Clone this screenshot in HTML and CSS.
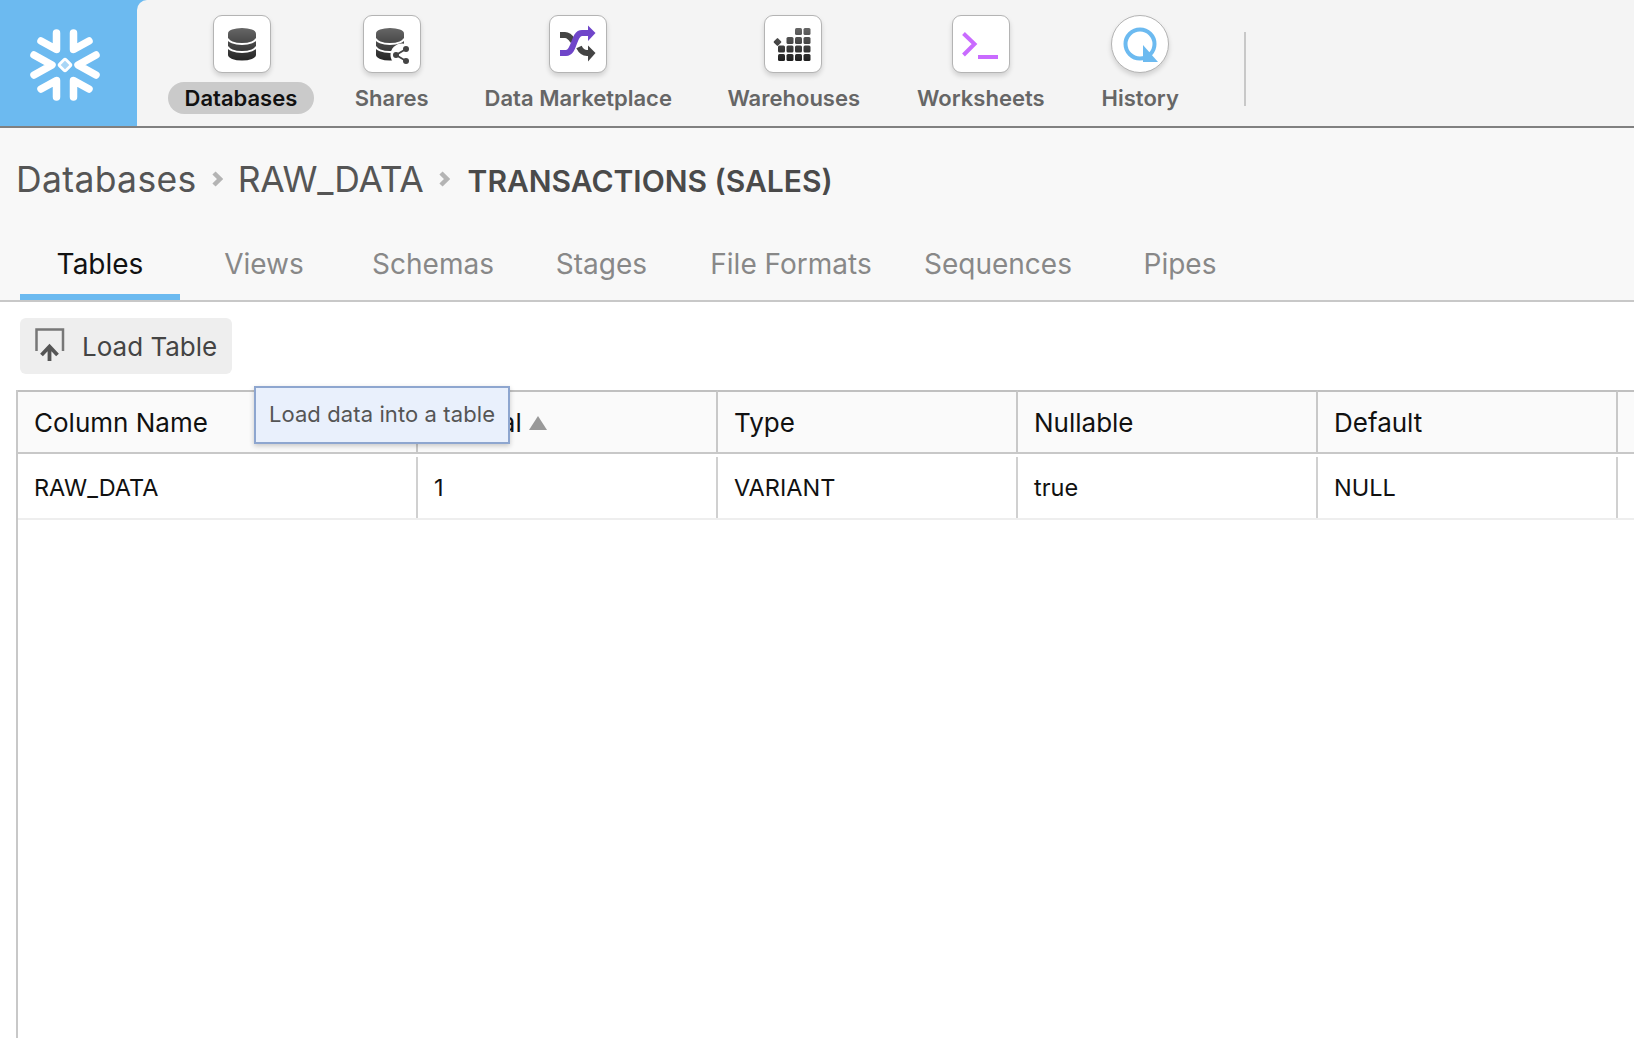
FILE: index.html
```html
<!DOCTYPE html>
<html lang="en">
<head>
    <meta charset="UTF-8">
    <meta name="viewport" content="width=device-width, initial-scale=1.0">
    <title>TRANSACTIONS (SALES)</title>
    <link rel="stylesheet" href="styles.css">
</head>
<body>
    <header class="topbar">
        <div class="logo">
            <svg width="74" height="74" viewBox="-37 -37 74 74">
                <g fill="none" stroke="#fff" stroke-width="7.500" stroke-linecap="round" stroke-linejoin="round">
                    <path d="M-8.500 -32V-15.500L-24 -24"/>
                    <path d="M8.500 -32V-15.500L24 -24"/>
                    <path d="M-8.500 32V15.500L-24 24"/>
                    <path d="M8.500 32V15.500L24 24"/>
                    <path d="M-31 -10L-13 0L-31 10"/>
                    <path d="M31 -10L13 0L31 10"/>
                </g>
                <rect x="-4.500" y="-4.500" width="9" height="9" rx="1.500" transform="rotate(45)" fill="#a9d6f6" stroke="#fff" stroke-width="2.800"/>
            </svg>
        </div>
        <nav class="nav">
            <a class="nav-item active">
                <span class="tile">
                    <svg width="56" height="56" viewBox="0 0 56 56">
                        <defs>
                            <linearGradient id="dark" gradientUnits="userSpaceOnUse" x1="0" y1="12" x2="0" y2="46">
                                <stop offset="0" stop-color="#666"/>
                                <stop offset="1" stop-color="#222"/>
                            </linearGradient>
                        </defs>
                        <path d="M14 17.500a14 5.500 0 0 1 28 0V39a14 5.500 0 0 1 -28 0Z" fill="url(#dark)"/>
                        <path d="M14 22.500a14 5.500 0 0 0 28 0M14 30.500a14 5.500 0 0 0 28 0" fill="none" stroke="#fff" stroke-width="1.800"/>
                    </svg>
                </span>
                <span class="label">Databases</span>
            </a>
            <a class="nav-item shares">
                <span class="tile">
                    <svg width="56" height="56" viewBox="0 0 56 56">
                        <path d="M12 17.500a14 5.500 0 0 1 28 0V39a14 5.500 0 0 1 -28 0Z" fill="url(#dark)"/>
                        <path d="M12 22.500a14 5.500 0 0 0 28 0M12 30.500a14 5.500 0 0 0 28 0" fill="none" stroke="#fff" stroke-width="1.800"/>
                        <circle cx="38" cy="39" r="11.500" fill="#fff"/>
                        <path d="M42 33L32 39L42 45" fill="none" stroke="#444" stroke-width="1.800"/>
                        <circle cx="42" cy="33" r="3" fill="#444"/>
                        <circle cx="32" cy="39" r="3" fill="#444"/>
                        <circle cx="42" cy="45" r="3" fill="#444"/>
                    </svg>
                </span>
                <span class="label">Shares</span>
            </a>
            <a class="nav-item market">
                <span class="tile">
                    <svg width="56" height="56" viewBox="0 0 56 56">
                        <path d="M10 19H15C19 19 21 22 23 25M29 31C31 35 33 37 37 37H39" fill="none" stroke="#444" stroke-width="6"/>
                        <path d="M38 29.500L45.500 37L38 45.500Z" fill="#444"/>
                        <path d="M10 37H16C25 37 23 17 32 17H39" fill="none" stroke="#6f45c9" stroke-width="6"/>
                        <path d="M38 9.500L45.500 17L38 25Z" fill="#6f45c9"/>
                    </svg>
                </span>
                <span class="label">Data Marketplace</span>
            </a>
            <a class="nav-item warehouses">
                <span class="tile">
                    <svg width="56" height="56" viewBox="0 0 56 56">
                        <defs>
                            <linearGradient id="bricks" gradientUnits="userSpaceOnUse" x1="0" y1="12" x2="0" y2="46">
                                <stop offset="0" stop-color="#666"/>
                                <stop offset="1" stop-color="#1c1c1c"/>
                            </linearGradient>
                        </defs>
                        <g fill="url(#bricks)">
                            <rect x="30" y="12" width="7" height="7" rx="1.500"/>
                            <rect x="38.500" y="12" width="7" height="7" rx="1.500"/>
                            <rect x="9.500" y="23" width="6" height="6" rx="1" transform="rotate(45 12.500 26)"/>
                            <rect x="21.500" y="21" width="7" height="7" rx="1.500"/>
                            <rect x="30" y="21" width="7" height="7" rx="1.500"/>
                            <rect x="38.500" y="21" width="7" height="7" rx="1.500"/>
                            <rect x="13" y="29.500" width="7" height="7" rx="1.500"/>
                            <rect x="21.500" y="29.500" width="7" height="7" rx="1.500"/>
                            <rect x="30" y="29.500" width="7" height="7" rx="1.500"/>
                            <rect x="38.500" y="29.500" width="7" height="7" rx="1.500"/>
                            <rect x="13" y="38" width="7" height="7" rx="1.500"/>
                            <rect x="21.500" y="38" width="7" height="7" rx="1.500"/>
                            <rect x="30" y="38" width="7" height="7" rx="1.500"/>
                            <rect x="38.500" y="38" width="7" height="7" rx="1.500"/>
                        </g>
                    </svg>
                </span>
                <span class="label">Warehouses</span>
            </a>
            <a class="nav-item">
                <span class="tile">
                    <svg width="56" height="56" viewBox="0 0 56 56">
                        <path d="M10.500 17.500L21.500 28L10.500 39" fill="none" stroke="#c96bff" stroke-width="4"/>
                        <rect x="25" y="39" width="20" height="4" fill="#c96bff"/>
                    </svg>
                </span>
                <span class="label">Worksheets</span>
            </a>
            <a class="nav-item">
                <span class="tile round">
                    <svg width="56" height="56" viewBox="0 0 56 56">
                        <circle cx="28" cy="28" r="14.500" fill="none" stroke="#6cbaf0" stroke-width="4"/>
                        <path d="M31 29V46H46Z" fill="#6cbaf0"/>
                    </svg>
                </span>
                <span class="label">History</span>
            </a>
            <div class="nav-sep"></div>
        </nav>
    </header>

    <section class="subhead">
        <div class="crumbs">
            <span class="crumb wide">Databases</span>
            <svg class="crumb-arrow" width="12" height="18" viewBox="0 0 12 18"><path d="M3 3L9 9L3 15" fill="none" stroke="#b4b4b4" stroke-width="4.500"/></svg>
            <span class="crumb tight">RAW_DATA</span>
            <svg class="crumb-arrow" width="12" height="18" viewBox="0 0 12 18"><path d="M3 3L9 9L3 15" fill="none" stroke="#b4b4b4" stroke-width="4.500"/></svg>
            <span class="crumb-current">TRANSACTIONS (SALES)</span>
        </div>
        <div class="tabs">
            <a class="tab active">Tables</a>
            <a class="tab">Views</a>
            <a class="tab">Schemas</a>
            <a class="tab">Stages</a>
            <a class="tab">File Formats</a>
            <a class="tab">Sequences</a>
            <a class="tab">Pipes</a>
        </div>
    </section>

    <main class="content">
        <div class="toolbar">
            <button class="load-btn">
                <svg width="31" height="36" viewBox="0 0 31 36">
                    <path d="M2.500 23V1.500H29V23" fill="none" stroke="#777" stroke-width="2.500"/>
                    <path d="M15.500 33V19M7.500 27L15.500 18.500L23.500 27" fill="none" stroke="#555" stroke-width="3.800"/>
                </svg>
                Load Table
            </button>
            <div class="tooltip">Load data into a table</div>
        </div>
        <div class="grid-wrap">
            <table class="grid">
                <colgroup>
                    <col class="col-name">
                    <col class="col-std">
                    <col class="col-std">
                    <col class="col-std">
                    <col class="col-std">
                    <col class="col-rest">
                </colgroup>
                <thead>
                    <tr>
                        <th>Column Name</th>
                        <th>Ordinal <span class="sort-up"></span></th>
                        <th>Type</th>
                        <th>Nullable</th>
                        <th>Default</th>
                        <th></th>
                    </tr>
                </thead>
                <tbody>
                    <tr>
                        <td><div class="cell">RAW_DATA</div></td>
                        <td><div class="cell">1</div></td>
                        <td><div class="cell">VARIANT</div></td>
                        <td><div class="cell">true</div></td>
                        <td><div class="cell">NULL</div></td>
                        <td><div class="cell"></div></td>
                    </tr>
                </tbody>
            </table>
        </div>
    </main>
</body>
</html>
```

FILE: styles.css
```css
* {
    box-sizing: border-box;
}
html, body {
    height: 100%;
}
body {
    font-family: Inter, "Liberation Sans", sans-serif;
    margin: 0;
    background-color: #fff;
    color: #111;
    display: flex;
    flex-direction: column;
    overflow: hidden;
}

/* top bar */
.topbar {
    display: flex;
    height: 128px;
    flex: none;
    background-color: #6cbaf0;
    border-bottom: 2px solid #808080;
}
.logo {
    width: 137px;
    display: flex;
    align-items: center;
    justify-content: center;
    padding-right: 7px;
    padding-top: 3px;
}
.nav {
    flex: 1;
    display: flex;
    gap: 25px;
    padding: 15px 0 0 31px;
    background-color: #f4f4f4;
    border-top-left-radius: 10px;
}
.nav-item {
    display: flex;
    flex-direction: column;
    align-items: center;
}
.nav-item.active .tile {
    margin-left: 2px;
}
.nav-item.shares {
    margin-right: -1px;
}
.nav-item.shares .tile {
    margin-left: 1px;
}
.nav-item.market {
    margin-right: -1.500px;
}
.nav-item.warehouses .tile {
    margin-right: 2px;
}
.tile {
    width: 58px;
    height: 58px;
    background: #fff;
    border: 1px solid #b4b4b4;
    border-radius: 9px;
    box-shadow: 0 3px 5px rgba(0, 0, 0, 0.15);
}
.tile svg {
    display: block;
}
.tile.round {
    border-radius: 50%;
}
.label {
    margin-top: 9px;
    height: 32px;
    line-height: 32px;
    padding: 0 16px;
    border-radius: 16px;
    font-size: 22px;
    font-weight: 600;
    color: #666;
    white-space: nowrap;
}
.nav-item.active .label {
    padding: 0 16.500px;
    background-color: #cacaca;
    color: #111;
}
.nav-sep {
    width: 2px;
    height: 74px;
    margin: 17px 0 0 24px;
    background-color: #c8c8c8;
}

/* breadcrumb and tabs */
.subhead {
    flex: none;
    height: 174px;
    background-color: #f8f8f8;
    border-bottom: 2px solid #c8c8c8;
}
.crumbs {
    display: flex;
    align-items: center;
    height: 100px;
    padding-left: 16px;
    padding-top: 2px;
}
.crumb {
    font-size: 35.500px;
    color: #555;
}
.crumb.wide {
    letter-spacing: 0.350px;
}
.crumb.tight {
    letter-spacing: -0.250px;
}
.crumb-arrow {
    margin: 0 15px 0 14px;
    filter: blur(0.7px);
}
.crumb-current {
    margin: 3px 0 0 3px;
    font-size: 30px;
    font-weight: 600;
    color: #4a4a4a;
}
.tabs {
    display: grid;
    grid-template-columns: 160px 168px 170px 167px 212px 202px 162px;
    margin-left: 20px;
}
.tab {
    height: 72px;
    line-height: 72px;
    text-align: center;
    font-size: 28px;
    color: #888;
}
.tab.active {
    color: #111;
    border-bottom: 6px solid #6cbaf0;
}

/* toolbar and table */
.content {
    flex: 1;
    display: flex;
    flex-direction: column;
    min-height: 0;
}
.toolbar {
    position: relative;
    padding: 16px 0 16px 20px;
    flex: none;
}
.load-btn {
    display: flex;
    align-items: center;
    gap: 17px;
    width: 212px;
    height: 56px;
    padding: 0 0 0 14px;
    border: none;
    border-radius: 6px;
    background-color: #eee;
    font-family: inherit;
    font-size: 26px;
    color: #444;
}
.tooltip {
    position: absolute;
    left: 254px;
    top: 84px;
    z-index: 2;
    width: 256px;
    height: 58px;
    line-height: 52px;
    text-align: center;
    font-size: 22px;
    letter-spacing: 0.100px;
    color: #555;
    background-color: #e9f0fc;
    border: 2px solid #8ea6cf;
    box-shadow: 0 2px 5px rgba(0, 0, 0, 0.2);
}
.grid-wrap {
    flex: 1;
    margin-left: 16px;
    border-left: 2px solid #c8c8c8;
}
.grid {
    table-layout: fixed;
    border-collapse: separate;
    border-spacing: 0;
    width: 1620px;
}
.col-name {
    width: 400px;
}
.col-std {
    width: 300px;
}
.col-rest {
    width: 20px;
}
.grid th {
    height: 64px;
    padding: 0 0 0 16px;
    text-align: left;
    font-size: 26px;
    font-weight: 400;
    background-color: #fafafa;
    border-top: 2px solid #c0c0c0;
    border-bottom: 2px solid #c8c8c8;
    border-right: 2px solid #c8c8c8;
    white-space: nowrap;
}
.grid td {
    padding: 0;
    border-bottom: 2px solid #eee;
}
.cell {
    height: 61px;
    margin-top: 3px;
    line-height: 61px;
    padding-left: 16px;
    font-size: 23.500px;
    border-right: 2px solid #d0d0d0;
}
.sort-up {
    display: inline-block;
    position: relative;
    top: -2px;
    margin-left: 0;
    width: 0;
    height: 0;
    border-left: 9.500px solid transparent;
    border-right: 9.500px solid transparent;
    border-bottom: 14px solid #999;
}
```
